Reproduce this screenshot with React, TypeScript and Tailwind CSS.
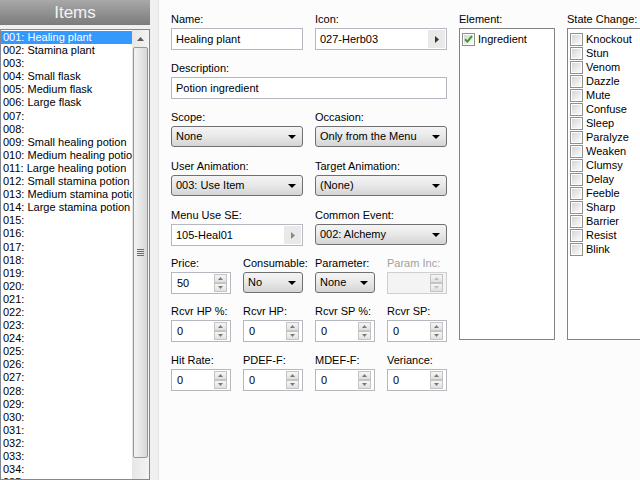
import React from "react";

const items: string[] = [
  "Healing plant",
  "Stamina plant",
  "",
  "Small flask",
  "Medium flask",
  "Large flask",
  "",
  "",
  "Small healing potion",
  "Medium healing potion",
  "Large healing potion",
  "Small stamina potion",
  "Medium stamina potion",
  "Large stamina potion",
];

const states = [
  "Knockout",
  "Stun",
  "Venom",
  "Dazzle",
  "Mute",
  "Confuse",
  "Sleep",
  "Paralyze",
  "Weaken",
  "Clumsy",
  "Delay",
  "Feeble",
  "Sharp",
  "Barrier",
  "Resist",
  "Blink",
];

function pad(n: number) {
  return String(n).padStart(3, "0");
}

function Label({ text, disabled }: { text: string; disabled?: boolean }) {
  return (
    <div className={`h-[14px] leading-[14px] mb-[2px] whitespace-nowrap ${disabled ? "text-[#a0a0a0]" : "text-black"}`}>
      {text}
    </div>
  );
}

function TextBox({ value, button, dimArrow }: { value: string; button?: boolean; dimArrow?: boolean }) {
  return (
    <div className="h-[22px] border border-[#b5b8be] bg-white flex items-center">
      <div className="flex-1 pl-[4px] whitespace-nowrap overflow-hidden">{value}</div>
      {button && (
        <div className="w-[17px] h-[18px] mr-[1px] bg-[#e9e9e9] flex items-center justify-center">
          <svg width="4" height="7" viewBox="0 0 4 7">
            <path d="M0 0 L4 3.5 L0 7 Z" fill={dimArrow ? "#8a8a8a" : "#333"} />
          </svg>
        </div>
      )}
    </div>
  );
}

function Select({ value }: { value: string }) {
  return (
    <div className="h-[22px] flex items-start">
      <div className="w-full h-[21px] rounded-[3px] border border-[#707070] bg-gradient-to-b from-[#f4f4f4] via-[#e8e8e8] to-[#d4d4d4] flex items-center justify-between pl-[4px] pr-[6px]">
        <span className="whitespace-nowrap">{value}</span>
        <svg width="8" height="4" viewBox="0 0 8 4">
          <path d="M0 0 L8 0 L4 4 Z" fill="#000" />
        </svg>
      </div>
    </div>
  );
}

function SpinBtn({ up, disabled }: { up?: boolean; disabled?: boolean }) {
  return (
    <div className="w-[13px] h-[9px] border border-[#c4c4c4] bg-gradient-to-b from-[#f6f6f6] to-[#e0e0e0] flex items-center justify-center">
      <svg width="5" height="3" viewBox="0 0 5 3">
        <path d={up ? "M0 3 L5 3 L2.5 0 Z" : "M0 0 L5 0 L2.5 3 Z"} fill={disabled ? "#c0c0c0" : "#7a7a7a"} />
      </svg>
    </div>
  );
}

function Spin({ value, disabled }: { value?: string; disabled?: boolean }) {
  return (
    <div
      className={`h-[22px] border flex items-center justify-between pr-[3px] ${
        disabled ? "border-[#cfcfcf] bg-[#f4f4f4]" : "border-[#b5b8be] bg-white"
      }`}
    >
      <div className="pl-[5px]">{value ?? ""}</div>
      <div className="flex flex-col">
        <SpinBtn up disabled={disabled} />
        <SpinBtn disabled={disabled} />
      </div>
    </div>
  );
}

function Check({ checked }: { checked?: boolean }) {
  return (
    <div className="w-[13px] h-[13px] border border-[#8e8f8f] bg-white p-[1px] shrink-0">
      <div className="w-full h-full bg-gradient-to-br from-[#d6d6d6] to-[#fbfbfb] flex items-center justify-center">
        {checked && (
          <svg width="9" height="8" viewBox="0 0 9 8">
            <path d="M1 4.2 L3.4 6.6 L8 1" stroke="#3d9b2f" strokeWidth="2" fill="none" />
          </svg>
        )}
      </div>
    </div>
  );
}

function Field({ label, w, children, disabled }: { label: string; w: string; children: React.ReactNode; disabled?: boolean }) {
  return (
    <div className={w}>
      <Label text={label} disabled={disabled} />
      {children}
    </div>
  );
}

export default function App() {
  const list: string[] = [];
  for (let i = 1; i <= 36; i++) list.push(`${pad(i)}: ${items[i - 1] ?? ""}`);

  return (
    <div className="w-[640px] h-[480px] overflow-hidden flex bg-[#f0f0f0] text-[11px] font-['Liberation_Sans',Arial,sans-serif] text-black">
      {/* left panel */}
      <div className="w-[150px] shrink-0 flex flex-col">
        <div className="h-[25px] bg-gradient-to-b from-[#a9a9a9] to-[#7b7b7b] flex items-center justify-center text-[17px] text-[#f2f2f2] leading-none">
          Items
        </div>
        <div className="mt-[4px] flex-1 border border-[#828790] bg-white flex overflow-hidden">
          <div className="w-[131px] pt-[1px] overflow-hidden">
            {list.map((t, i) => (
              <div
                key={i}
                className={`h-[13.1px] leading-[13px] pl-[2px] whitespace-nowrap overflow-hidden ${
                  i === 0 ? "bg-[#3399ff] text-white" : ""
                }`}
              >
                {t}
              </div>
            ))}
          </div>
          <div className="w-[17px] bg-gradient-to-r from-[#e6e6e6] to-[#f4f4f4] flex flex-col items-center">
            <div className="h-[17px] w-full flex items-center justify-center">
              <svg width="7" height="4" viewBox="0 0 7 4">
                <path d="M0 4 L7 4 L3.5 0 Z" fill="#5a5a5a" />
              </svg>
            </div>
            <div className="w-[15px] h-[411px] rounded-[2px] border border-[#979797] bg-gradient-to-r from-[#f3f3f3] via-[#e6e6e6] to-[#d6d6d6] flex items-center justify-center">
              <div className="flex flex-col gap-[1px]">
                <div className="w-[7px] h-[1px] bg-[#6a6a6a]" />
                <div className="w-[7px] h-[1px] bg-[#6a6a6a]" />
                <div className="w-[7px] h-[1px] bg-[#6a6a6a]" />
                <div className="w-[7px] h-[1px] bg-[#6a6a6a]" />
              </div>
            </div>
          </div>
        </div>
      </div>

      {/* spacer */}
      <div className="w-[9px] shrink-0 border-r border-[#e2e2e2]" />

      {/* main */}
      <div className="flex-1 bg-[#fcfcfc] pt-[12px] pl-[12px] flex gap-[12px]">
        {/* form */}
        <div className="w-[276px] shrink-0 flex flex-col">
          <div className="flex gap-[12px]">
            <Field label="Name:" w="w-[132px]">
              <TextBox value="Healing plant" />
            </Field>
            <Field label="Icon:" w="w-[132px]">
              <TextBox value="027-Herb03" button />
            </Field>
          </div>
          <div className="flex mt-[11px]">
            <Field label="Description:" w="w-[276px]">
              <TextBox value="Potion ingredient" />
            </Field>
          </div>
          <div className="flex gap-[12px] mt-[11px]">
            <Field label="Scope:" w="w-[132px]">
              <Select value="None" />
            </Field>
            <Field label="Occasion:" w="w-[132px]">
              <Select value="Only from the Menu" />
            </Field>
          </div>
          <div className="flex gap-[12px] mt-[11px]">
            <Field label="User Animation:" w="w-[132px]">
              <Select value="003: Use Item" />
            </Field>
            <Field label="Target Animation:" w="w-[132px]">
              <Select value="(None)" />
            </Field>
          </div>
          <div className="flex gap-[12px] mt-[11px]">
            <Field label="Menu Use SE:" w="w-[132px]">
              <TextBox value="105-Heal01" button dimArrow />
            </Field>
            <Field label="Common Event:" w="w-[132px]">
              <Select value="002: Alchemy" />
            </Field>
          </div>
          <div className="flex gap-[12px] mt-[10px]">
            <Field label="Price:" w="w-[60px]">
              <Spin value="50" />
            </Field>
            <Field label="Consumable:" w="w-[60px]">
              <Select value="No" />
            </Field>
            <Field label="Parameter:" w="w-[60px]">
              <Select value="None" />
            </Field>
            <Field label="Param Inc:" w="w-[60px]" disabled>
              <Spin disabled />
            </Field>
          </div>
          <div className="flex gap-[12px] mt-[10px]">
            <Field label="Rcvr HP %:" w="w-[60px]">
              <Spin value="0" />
            </Field>
            <Field label="Rcvr HP:" w="w-[60px]">
              <Spin value="0" />
            </Field>
            <Field label="Rcvr SP %:" w="w-[60px]">
              <Spin value="0" />
            </Field>
            <Field label="Rcvr SP:" w="w-[60px]">
              <Spin value="0" />
            </Field>
          </div>
          <div className="flex gap-[12px] mt-[11px]">
            <Field label="Hit Rate:" w="w-[60px]">
              <Spin value="0" />
            </Field>
            <Field label="PDEF-F:" w="w-[60px]">
              <Spin value="0" />
            </Field>
            <Field label="MDEF-F:" w="w-[60px]">
              <Spin value="0" />
            </Field>
            <Field label="Veriance:" w="w-[60px]">
              <Spin value="0" />
            </Field>
          </div>
        </div>

        {/* element */}
        <div className="w-[96px] shrink-0">
          <Label text="Element:" />
          <div className="h-[312px] border border-[#828282] bg-white pt-[3px] pl-[2px]">
            <div className="flex items-center gap-[3px] h-[14px]">
              <Check checked />
              <span>Ingredient</span>
            </div>
          </div>
        </div>

        {/* state change */}
        <div className="w-[100px] shrink-0">
          <Label text="State Change:" />
          <div className="h-[312px] border border-[#828282] border-r-0 bg-white pt-[3px] pl-[2px]">
            {states.map((s) => (
              <div key={s} className="flex items-center gap-[3px] h-[14px]">
                <Check />
                <span>{s}</span>
              </div>
            ))}
          </div>
        </div>
      </div>
    </div>
  );
}
